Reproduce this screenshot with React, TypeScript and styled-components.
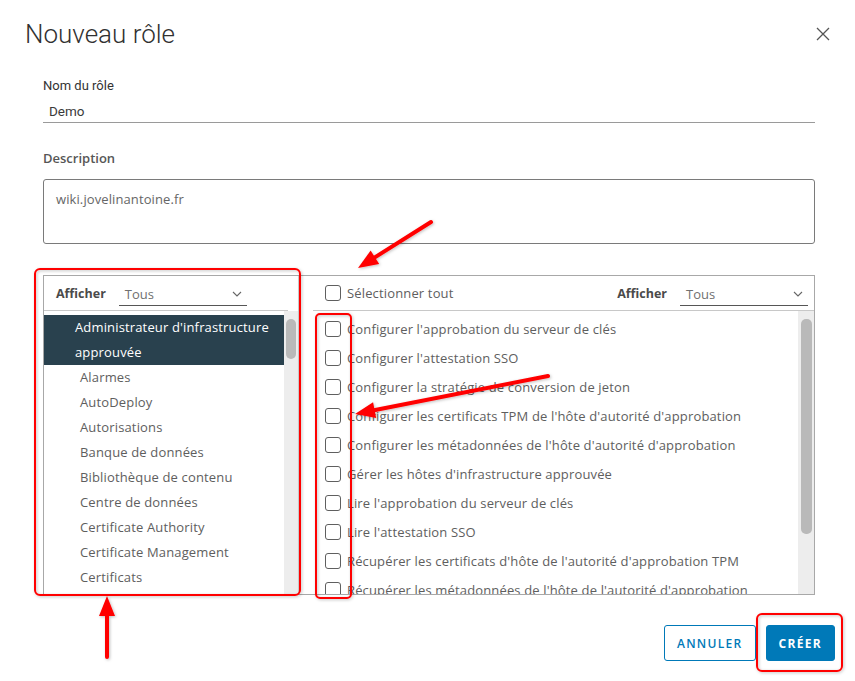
import React from 'react';
import styled, { createGlobalStyle } from 'styled-components';

const GlobalStyle = createGlobalStyle`
  html, body {
    margin: 0;
    padding: 0;
    background: #fff;
  }
  body {
    font-family: "Open Sans", "Liberation Sans", sans-serif;
    color: #565656;
  }
`;

const Page = styled.div`
  position: relative;
  width: 855px;
  height: 681px;
  overflow: hidden;
  background: #fff;
`;

const Header = styled.div`
  display: flex;
  align-items: center;
  justify-content: space-between;
  height: 32px;
  margin-top: 18px;
  padding: 0 24px 0 25px;
`;

const Title = styled.h1`
  margin: 0;
  font-family: Roboto, "Liberation Sans", sans-serif;
  font-weight: 300;
  font-size: 26px;
  line-height: 32px;
  color: #313131;
`;

const CloseButton = styled.button`
  border: 0;
  background: none;
  padding: 0;
  width: 16px;
  height: 16px;
  display: flex;
  cursor: pointer;
`;

const Form = styled.div`
  padding: 0 40px 0 43px;
`;

const Label = styled.div<{ $top: number; $bold?: boolean }>`
  margin-top: ${(p) => p.$top}px;
  font-family: ${(p) => (p.$bold ? '"Open Sans", sans-serif' : 'Roboto, "Liberation Sans", sans-serif')};
  font-weight: ${(p) => (p.$bold ? 600 : 400)};
  font-size: 13px;
  line-height: 18px;
  color: ${(p) => (p.$bold ? '#565656' : '#333')};
`;

const TextInput = styled.div`
  margin-top: 5px;
  height: 22px;
  padding-left: 6px;
  font-family: Roboto, "Liberation Sans", sans-serif;
  font-size: 13.5px;
  line-height: 22px;
  color: #3a3a3a;
  border-bottom: 1px solid #9a9a9a;
`;

const TextArea = styled.div`
  margin-top: 12px;
  height: 65px;
  box-sizing: border-box;
  border: 1px solid #7a7a7a;
  border-radius: 3px;
  padding: 11px 12px;
  font-size: 13px;
  letter-spacing: 0.1px;
  line-height: 16px;
  color: #666;
`;

const Split = styled.div`
  display: flex;
  margin-top: 31px;
  height: 320px;
  box-sizing: border-box;
  border: 1px solid #a8a8a8;
`;

const LeftPane = styled.div`
  width: 254px;
  display: flex;
  flex-direction: column;
  border-right: 1px solid #d0d0d0;
`;

const RightPane = styled.div`
  flex: 1;
  display: flex;
  flex-direction: column;
  padding-left: 14px;
`;

const PaneHeader = styled.div<{ $endGap?: number }>`
  display: flex;
  align-items: center;
  height: 34px;
  flex-shrink: 0;
  border-bottom: 1px solid #c8c8c8;
  margin-right: ${(p) => p.$endGap ?? 0}px;
  padding: 0 6px 0 12px;
`;

const FilterLabel = styled.span`
  font-weight: 700;
  font-size: 12.5px;
  color: #4a4a4a;
`;

const Select = styled.div`
  display: flex;
  align-items: center;
  justify-content: space-between;
  width: 128px;
  height: 22px;
  margin: 3px 0 0 13px;
  padding: 0 5px 0 6px;
  box-sizing: border-box;
  border-bottom: 1px solid #565656;
  font-size: 13px;
  color: #707070;
`;

const Spacer = styled.div`
  flex: 1;
`;

const Scroller = styled.div`
  flex: 1;
  display: flex;
  min-height: 0;
  overflow: hidden;
`;

const List = styled.div<{ $top: number }>`
  flex: 1;
  padding-top: ${(p) => p.$top}px;
  overflow: hidden;
`;

const Track = styled.div<{ $width: number }>`
  width: ${(p) => p.$width}px;
  flex-shrink: 0;
  background: #ededed;
  display: flex;
  justify-content: center;
`;

const Thumb = styled.div<{ $top: number; $height: number; $width: number }>`
  margin-top: ${(p) => p.$top}px;
  width: ${(p) => p.$width}px;
  height: ${(p) => p.$height}px;
  border-radius: 5px;
  background: #b9b9b9;
`;

const NavItem = styled.div<{ $active?: boolean }>`
  padding-left: ${(p) => (p.$active ? 31 : 36)}px;
  padding-right: 8px;
  font-size: 13px;
  letter-spacing: 0.15px;
  line-height: 25px;
  white-space: ${(p) => (p.$active ? 'normal' : 'nowrap')};
  background: ${(p) => (p.$active ? '#29414e' : 'transparent')};
  color: ${(p) => (p.$active ? '#fff' : '#5e5e5e')};
  font-weight: ${(p) => (p.$active ? 500 : 400)};
`;

const Row = styled.label<{ $indent?: number }>`
  display: flex;
  align-items: center;
  height: 29px;
  gap: 6px;
  padding-left: ${(p) => p.$indent ?? 0}px;
  font-size: 13px;
  letter-spacing: 0.15px;
  color: #5e5e5e;
  white-space: nowrap;
`;

const Box = styled.span`
  width: 16px;
  height: 16px;
  box-sizing: border-box;
  border: 1.2px solid #5f5f5f;
  border-radius: 3px;
  flex-shrink: 0;
  background: #fff;
`;

const Footer = styled.div`
  display: flex;
  justify-content: flex-end;
  gap: 10px;
  margin-top: 30px;
  padding-right: 20px;
`;

const Button = styled.button<{ $primary?: boolean }>`
  height: 36px;
  padding: 0 12px;
  border-radius: 3px;
  border: 1px solid #0079b8;
  background: ${(p) => (p.$primary ? '#0079b8' : '#fff')};
  color: ${(p) => (p.$primary ? '#fff' : '#0079b8')};
  font-family: "Open Sans", sans-serif;
  font-size: 12px;
  font-weight: ${(p) => (p.$primary ? 700 : 600)};
  letter-spacing: 1.3px;
  cursor: pointer;
`;

const Overlay = styled.svg`
  position: absolute;
  left: 0;
  top: 0;
  pointer-events: none;
`;

const Chevron = () => (
  <svg width="10" height="6" viewBox="0 0 10 6">
    <path d="M1 1 L5 5 L9 1" fill="none" stroke="#666" strokeWidth="1.1" />
  </svg>
);

const navItems = [
  'Alarmes',
  'AutoDeploy',
  'Autorisations',
  'Banque de données',
  'Bibliothèque de contenu',
  'Centre de données',
  'Certificate Authority',
  'Certificate Management',
  'Certificats',
];

const privileges = [
  "Configurer l'approbation du serveur de clés",
  "Configurer l'attestation SSO",
  'Configurer la stratégie de conversion de jeton',
  "Configurer les certificats TPM de l'hôte d'autorité d'approbation",
  "Configurer les métadonnées de l'hôte d'autorité d'approbation",
  "Gérer les hôtes d'infrastructure approuvée",
  "Lire l'approbation du serveur de clés",
  "Lire l'attestation SSO",
  "Récupérer les certificats d'hôte de l'autorité d'approbation TPM",
  "Récupérer les métadonnées de l'hôte de l'autorité d'approbation",
];

type ArrowProps = { x1: number; y1: number; x2: number; y2: number };

// shaft from tail (x1,y1) to tip (x2,y2), with a filled head
const Arrow = ({ x1, y1, x2, y2 }: ArrowProps) => {
  const dx = x2 - x1;
  const dy = y2 - y1;
  const len = Math.hypot(dx, dy);
  const ux = dx / len;
  const uy = dy / len;
  const headLen = 20;
  const headHalf = 8;
  const bx = x2 - ux * headLen;
  const by = y2 - uy * headLen;
  const pts = [
    `${x2},${y2}`,
    `${bx - uy * headHalf},${by + ux * headHalf}`,
    `${bx + uy * headHalf},${by - ux * headHalf}`,
  ].join(' ');
  return (
    <g>
      <line x1={x1} y1={y1} x2={bx + ux * 2} y2={by + uy * 2} stroke="#f00" strokeWidth="4" strokeLinecap="round" />
      <polygon points={pts} fill="#f00" />
    </g>
  );
};

const Annotations = () => (
  <Overlay width="855" height="681" viewBox="0 0 855 681">
    <defs>
      <filter id="shadow" x="-20%" y="-20%" width="140%" height="140%">
        <feDropShadow dx="1" dy="1" stdDeviation="1.5" floodColor="#000" floodOpacity="0.25" />
      </filter>
    </defs>
    <g filter="url(#shadow)" fill="none" stroke="#f00" strokeWidth="2">
      <rect x="35" y="269" width="265" height="326" rx="5" />
      <rect x="316" y="314" width="35" height="284" rx="4" />
      <rect x="757" y="614" width="85" height="57" rx="5" />
    </g>
    <g filter="url(#shadow)">
      <Arrow x1={431} y1={222} x2={358} y2={268} />
      <Arrow x1={548} y1={376} x2={355} y2={414} />
      <Arrow x1={107} y1={657} x2={107} y2={596} />
    </g>
  </Overlay>
);

export default function App() {
  return (
    <Page>
      <GlobalStyle />
      <Header>
        <Title>Nouveau rôle</Title>
        <CloseButton aria-label="Fermer">
          <svg width="16" height="16" viewBox="0 0 16 16">
            <path d="M2 2 L14 14 M14 2 L2 14" stroke="#555" strokeWidth="1.3" fill="none" />
          </svg>
        </CloseButton>
      </Header>
      <Form>
        <Label $top={27}>Nom du rôle</Label>
        <TextInput>Demo</TextInput>
        <Label $top={26} $bold>
          Description
        </Label>
        <TextArea>wiki.jovelinantoine.fr</TextArea>
        <Split>
          <LeftPane>
            <PaneHeader $endGap={10}>
              <FilterLabel>Afficher</FilterLabel>
              <Select>
                Tous
                <Chevron />
              </Select>
            </PaneHeader>
            <Scroller>
              <List $top={4}>
                <NavItem $active>Administrateur d'infrastructure approuvée</NavItem>
                {navItems.map((n) => (
                  <NavItem key={n}>{n}</NavItem>
                ))}
              </List>
              <Track $width={14}>
                <Thumb $top={8} $height={40} $width={10} />
              </Track>
            </Scroller>
          </LeftPane>
          <RightPane>
            <PaneHeader>
              <Row>
                <Box />
                Sélectionner tout
              </Row>
              <Spacer />
              <FilterLabel>Afficher</FilterLabel>
              <Select>
                Tous
                <Chevron />
              </Select>
            </PaneHeader>
            <Scroller>
              <List $top={3}>
                {privileges.map((p) => (
                  <Row key={p} $indent={12}>
                    <Box />
                    {p}
                  </Row>
                ))}
              </List>
              <Track $width={16}>
                <Thumb $top={8} $height={215} $width={11} />
              </Track>
            </Scroller>
          </RightPane>
        </Split>
      </Form>
      <Footer>
        <Button>ANNULER</Button>
        <Button $primary>CRÉER</Button>
      </Footer>
      <Annotations />
    </Page>
  );
}
